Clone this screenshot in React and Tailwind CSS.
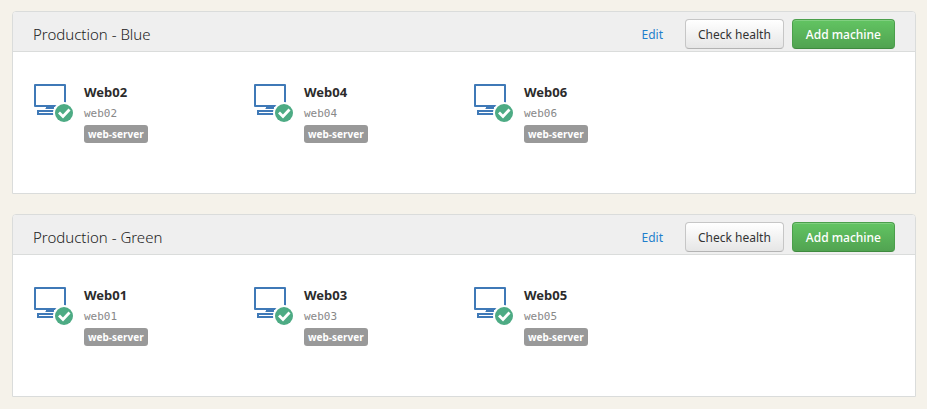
const groups = [
  { name: 'Production - Blue', machines: ['Web02', 'Web04', 'Web06'] },
  { name: 'Production - Green', machines: ['Web01', 'Web03', 'Web05'] },
];

function MachineIcon() {
  return (
    <svg viewBox="0 0 40 40" className="h-10 w-10 shrink-0" aria-hidden="true">
      <g fill="#3f79b7">
        <path fillRule="evenodd" d="M1 0h30a1 1 0 0 1 1 1v21a1 1 0 0 1-1 1H1a1 1 0 0 1-1-1V1a1 1 0 0 1 1-1zM2 2v19h28V2z" />
        <path d="M12 23h8v1.5h1V25H11v-.5h1z" />
        <path fillRule="evenodd" d="M3 26h26v5H3zM5 28v1h22v-1z" />
      </g>
      <circle cx="30" cy="29" r="11" fill="#fff" />
      <circle cx="30" cy="29" r="9" fill="#4dab84" />
      <path d="M25 28.5l4 4 6.5-7" fill="none" stroke="#fff" strokeWidth="2.8" />
    </svg>
  );
}

function Machine({ name }) {
  return (
    <li className="flex w-[220px] gap-2.5">
      <MachineIcon />
      <div className="flex flex-col items-start">
        <strong className="text-[13px] leading-4 font-bold text-[#2b2b2b]">{name}</strong>
        <span className="mt-1 font-['DejaVu_Sans_Mono',monospace] text-[11px] leading-5 text-[#888]">
          {name.toLowerCase()}
        </span>
        <span className="mt-px rounded-[3px] bg-[#999] px-1 text-[10px] leading-[18px] font-bold text-white">
          web-server
        </span>
      </div>
    </li>
  );
}

function Group({ group }) {
  return (
    <section className="rounded-t border border-[#dadcdb] bg-white">
      <header className="flex h-10 items-center rounded-t-[3px] border-b border-[#dadcdb] bg-[#efefef] px-5 pt-1">
        <h2 className="flex-1 text-[15px] leading-5 font-light text-[#222]">{group.name}</h2>
        <a href="#edit" className="mr-[22px] pt-0.5 text-[12px] leading-5 text-[#1f7fcc]">Edit</a>
        <button
          type="button"
          className="mr-2 h-[30px] rounded border border-[#c6c6c6] border-b-[#b3b3b3] bg-linear-to-b from-white to-[#e6e6e6] px-3 pt-0.5 text-[12px] leading-5 text-[#333]"
        >
          Check health
        </button>
        <button
          type="button"
          className="h-[30px] rounded border border-[#4b9f4b] border-b-[#3f8a3f] bg-linear-to-b from-[#62c462] to-[#51a351] px-[13px] pt-0.5 text-[12px] leading-5 font-medium text-white shadow-[inset_0_1px_0_rgba(255,255,255,0.2)]"
        >
          Add machine
        </button>
      </header>
      <ul className="flex flex-wrap px-[21px] pt-8 pb-[50px]">
        {group.machines.map((name) => (
          <Machine key={name} name={name} />
        ))}
      </ul>
    </section>
  );
}

export default function App() {
  return (
    <main className="flex min-h-screen flex-col gap-5 bg-[#f5f2ea] py-[11px] pr-[11px] pl-3 font-['Noto_Sans',sans-serif]">
      {groups.map((group) => (
        <Group key={group.name} group={group} />
      ))}
    </main>
  );
}
